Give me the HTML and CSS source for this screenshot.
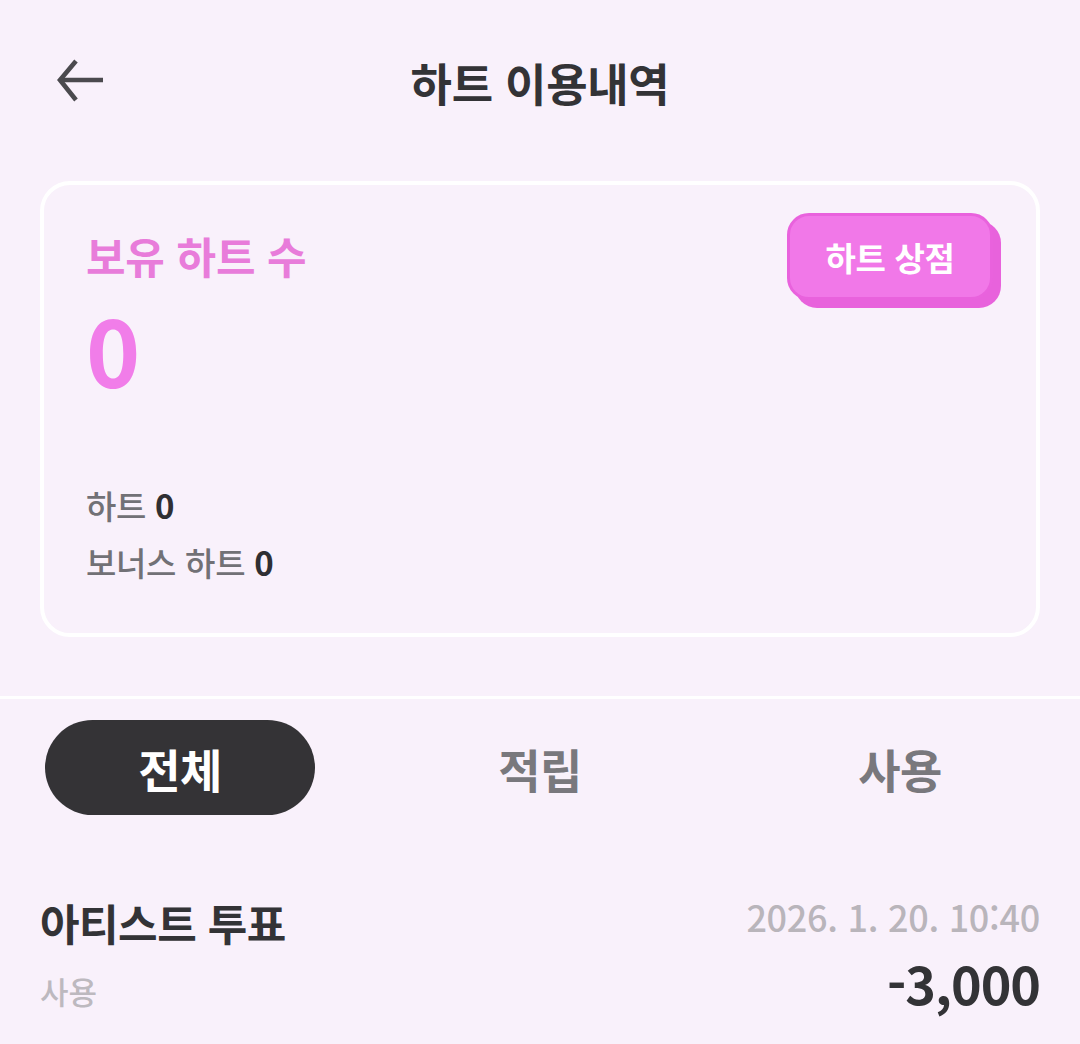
FILE: index.html
```html
<!DOCTYPE html>
<html lang="ko">
<head>
<meta charset="utf-8">
<title>하트 이용내역</title>
<link rel="stylesheet" href="styles.css">
</head>
<body>
<div class="page">
  <header class="header">
    <button class="back" aria-label="뒤로">
      <svg width="50" height="50" viewBox="0 0 50 50" fill="none" stroke="#4b4a4e" stroke-width="4.6" stroke-linecap="butt" stroke-linejoin="miter">
        <path d="M5 22 H48"/>
        <path d="M21 3 L5 22 L21 42"/>
      </svg>
    </button>
    <h1 class="title">하트 이용내역</h1>
  </header>

  <section class="card">
    <div class="card-top">
      <div class="label">보유 하트 수</div>
      <button class="shop-btn">하트 상점</button>
    </div>
    <div class="total">0</div>
    <div class="detail detail-first">하트 <b>0</b></div>
    <div class="detail detail-second">보너스 하트 <b>0</b></div>
  </section>

  <div class="divider"></div>

  <nav class="tabs">
    <div class="tab"><span class="pill">전체</span></div>
    <div class="tab"><span class="tab-text">적립</span></div>
    <div class="tab"><span class="tab-text">사용</span></div>
  </nav>

  <ul class="list">
    <li class="item">
      <div class="row row-1">
        <span class="item-title">아티스트 투표</span>
        <span class="item-date">2026. 1. 20. 10:40</span>
      </div>
      <div class="row row-2">
        <span class="item-type">사용</span>
        <span class="item-amount">-3,000</span>
      </div>
    </li>
  </ul>
</div>
</body>
</html>
```

FILE: styles.css
```css
* { box-sizing: border-box; }

html, body {
  margin: 0;
  padding: 0;
  background: #f9f1fb;
}

body {
  font-family: "Noto Sans CJK KR", "Noto Sans", sans-serif;
  color: #333336;
  width: 1080px;
  height: 1044px;
  overflow: hidden;
}

.page {
  width: 1080px;
}

.header {
  height: 164px;
  display: flex;
  align-items: center;
  justify-content: center;
  position: relative;
}

.back {
  position: absolute;
  left: 55px;
  top: 58px;
  width: 50px;
  height: 50px;
  padding: 0;
  border: 0;
  background: transparent;
  display: block;
}

.back svg { display: block; }

.title {
  margin: 0;
  font-size: 45px;
  font-weight: 700;
  line-height: 1;
  color: #333336;
  letter-spacing: -0.3px;
}

.card {
  margin: 17px 40px 0;
  height: 456px;
  border: 4px solid #ffffff;
  border-radius: 30px;
  padding: 28px 43px 0 42px;
  display: flex;
  flex-direction: column;
}

.card-top {
  display: flex;
  align-items: center;
  justify-content: space-between;
  height: 87px;
}

.label {
  font-size: 43px;
  font-weight: 700;
  color: #e87cda;
  line-height: 46px;
  letter-spacing: -0.2px;
  margin-top: -4px;
}

.shop-btn {
  width: 206px;
  height: 87px;
  border: 3px solid #e962dd;
  border-radius: 22px;
  background: #f178e8;
  box-shadow: 8px 8px 0 #e862dc;
  color: #ffffff;
  font-family: inherit;
  font-size: 33px;
  font-weight: 700;
  letter-spacing: -0.3px;
  padding: 0;
}

.total {
  margin-top: 2px;
  font-size: 92px;
  font-weight: 700;
  line-height: 92px;
  color: #f17de9;
}

.detail {
  font-size: 33px;
  line-height: 40px;
  color: #727176;
  font-weight: 500;
  letter-spacing: -0.3px;
}

.detail b {
  color: #2f2f33;
  font-weight: 700;
}

.detail-first { margin-top: 91px; }
.detail-second { margin-top: 17px; }

.divider {
  margin-top: 59px;
  height: 3px;
  background: #ffffff;
}

.tabs {
  margin-top: 21px;
  display: grid;
  grid-template-columns: repeat(3, 1fr);
  height: 95px;
}

.tab {
  display: flex;
  align-items: center;
  justify-content: center;
}

.pill {
  width: 270px;
  height: 95px;
  border-radius: 48px;
  background: #343336;
  color: #ffffff;
  display: flex;
  align-items: center;
  justify-content: center;
  font-size: 46px;
  font-weight: 700;
  letter-spacing: -0.5px;
}

.tab-text {
  font-size: 46px;
  font-weight: 700;
  color: #79787d;
  letter-spacing: -0.5px;
}

.list {
  list-style: none;
  margin: 81px 0 0;
  padding: 0 40px;
}

.row {
  display: flex;
  justify-content: space-between;
  align-items: flex-start;
}

.row-1 { height: 52px; }

.row-2 {
  margin-top: 5px;
  height: 60px;
}

.item-title {
  font-size: 43px;
  line-height: 52px;
  font-weight: 700;
  color: #333336;
  letter-spacing: -0.5px;
}

.item-date {
  font-size: 36px;
  line-height: 40px;
  font-weight: 500;
  color: #b9b5bb;
  letter-spacing: -0.3px;
}

.item-type {
  margin-top: 8px;
  font-size: 31px;
  line-height: 60px;
  font-weight: 500;
  color: #bdb9bf;
}

.item-amount {
  font-size: 52px;
  line-height: 60px;
  font-weight: 700;
  color: #333336;
  letter-spacing: -1px;
}
```
